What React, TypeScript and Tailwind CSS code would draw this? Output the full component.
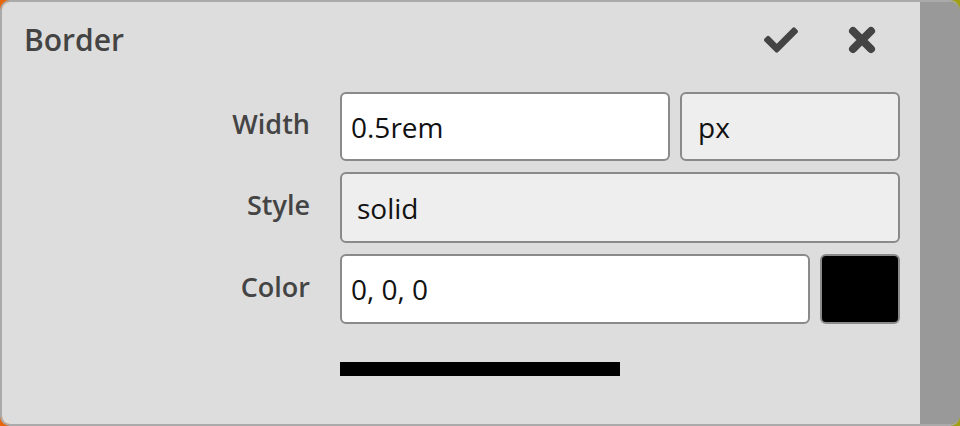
import React from "react";
import { FaCheck } from "react-icons/fa";

export default function App() {
  const font = { fontFamily: '"Open Sans", "Noto Sans", sans-serif' };
  return (
    <div
      className="w-[960px] h-[426px] bg-gradient-to-r from-[#e8650a] to-[#a0a010]"
      style={font}
    >
      <div className="h-full rounded-[10px] border-2 border-[#aaa] border-r-0 overflow-hidden flex">
        <div className="flex-1 bg-[#dddddd] flex flex-col">
          <div className="flex items-center h-[76px] pl-[22px] pr-[44px]">
            <div className="text-[30px] font-semibold text-[#444] leading-none">Border</div>
            <div className="ml-auto flex items-center gap-[50px] text-[#444]">
              <FaCheck size={34} />
              <svg width="28" height="28" viewBox="0 0 28 28">
                <path
                  d="M5 5 L23 23 M23 5 L5 23"
                  stroke="#444"
                  strokeWidth="8"
                  strokeLinecap="round"
                  fill="none"
                />
              </svg>
            </div>
          </div>
          <div className="flex flex-col mt-[14px]">
            <div className="flex items-center">
              <div className="w-[308px] text-right text-[27px] font-semibold text-[#444] mb-[4px]">Width</div>
              <div className="ml-[30px] w-[330px] h-[69px] bg-white border-2 border-[#8a8a8a] rounded-[6px] flex items-center pl-[9px] text-[28px] text-[#111]">0.5rem</div>
              <div className="ml-[10px] w-[220px] h-[69px] bg-[#eeeeee] border-2 border-[#8a8a8a] rounded-[6px] flex items-center pl-[16px] text-[28px] text-[#111]">px</div>
            </div>
            <div className="flex items-center mt-[11px]">
              <div className="w-[308px] text-right text-[27px] font-semibold text-[#444] mb-[4px]">Style</div>
              <div className="ml-[30px] w-[560px] h-[71px] bg-[#eeeeee] border-2 border-[#8a8a8a] rounded-[6px] flex items-center pl-[15px] text-[28px] text-[#111]">solid</div>
            </div>
            <div className="flex items-center mt-[11px]">
              <div className="w-[308px] text-right text-[27px] font-semibold text-[#444] mb-[4px]">Color</div>
              <div className="ml-[30px] w-[470px] h-[70px] bg-white border-2 border-[#8a8a8a] rounded-[6px] flex items-center pl-[9px] text-[28px] text-[#111]">0, 0, 0</div>
              <div className="ml-[10px] w-[80px] h-[70px] bg-black border-2 border-[#8a8a8a] rounded-[6px]"></div>
            </div>
          </div>
          <div className="ml-[338px] mt-[38px] w-[280px] h-[14px] bg-black"></div>
        </div>
        <div className="w-[40px] bg-[#999999]"></div>
      </div>
    </div>
  );
}
